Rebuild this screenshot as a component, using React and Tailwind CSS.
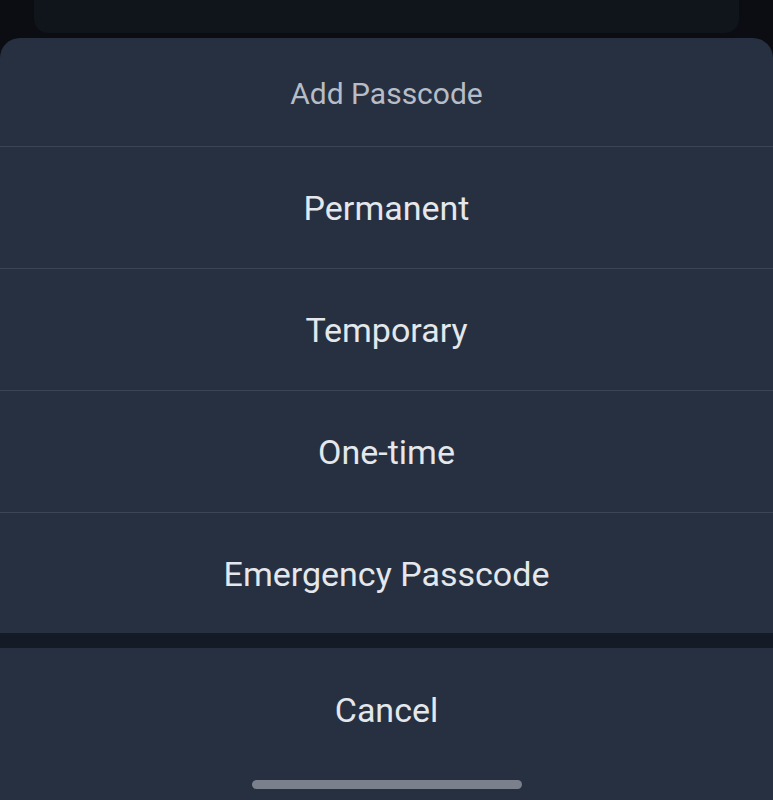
import React from "react";

const options = ["Permanent", "Temporary", "One-time", "Emergency Passcode"];

const App = () => {
  return (
    <div
      className="h-[800px] w-[773px] overflow-hidden bg-[#0b0d12] flex flex-col"
      style={{ fontFamily: "Roboto, 'Noto Sans', sans-serif" }}
    >
      {/* Card peeking behind the sheet */}
      <div className="px-[34px]">
        <div className="h-[33px] rounded-b-[14px] bg-[#10141b]" />
      </div>

      {/* Bottom sheet */}
      <div className="mt-[5px] flex-1 rounded-t-[20px] bg-[#263040] flex flex-col">
        <div className="h-[108px] pt-[2px] flex items-center justify-center text-[30px] text-[#b7bdc7]">
          Add Passcode
        </div>
        <ul>
          {options.map((label) => (
            <li
              key={label}
              className="h-[122px] last:h-[121px] border-t border-[#3a4556] pt-[2px] flex items-center justify-center text-[34px] text-[#e4e7ec] cursor-pointer"
            >
              {label}
            </li>
          ))}
        </ul>
        <div className="h-[15px] bg-[#151b26]" />
        <div className="flex-1 flex flex-col items-center">
          <button className="h-[124px] w-full flex items-center justify-center text-[34px] text-[#e4e7ec]">
            Cancel
          </button>
          {/* Home indicator */}
          <div className="mt-[8px] h-[9px] w-[270px] rounded-full bg-[#7a808c]" />
        </div>
      </div>
    </div>
  );
};

export default App;
